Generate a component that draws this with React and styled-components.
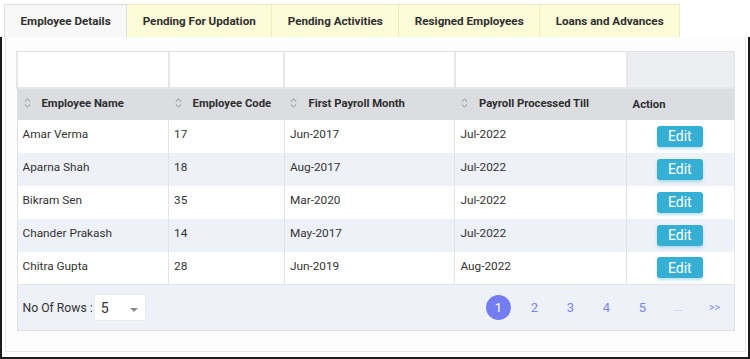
import React from 'react'
import styled, { createGlobalStyle } from 'styled-components'

const GlobalStyle = createGlobalStyle`
  html, body {
    margin: 0;
    padding: 0;
    background: #ffffff;
  }
  * {
    box-sizing: border-box;
  }
`

const Frame = styled.div`
  width: 750px;
  height: 359px;
  display: flex;
  flex-direction: column;
  background: #f5f6f9;
  font-family: Roboto, 'Liberation Sans', sans-serif;
  color: #333;
  overflow: hidden;
`

const TabBar = styled.div`
  display: flex;
  height: 37px;
  padding: 4px 0 0 4px;
  background: #ffffff;
`

const Tab = styled.div`
  display: flex;
  align-items: center;
  height: 33px;
  padding: 0 15.5px;
  font-size: 11.65px;
  font-weight: 700;
  color: #2f2f2f;
  background: ${(p) => (p.active ? '#f8f8f8' : '#fdfcd8')};
  border: 1px solid ${(p) => (p.active ? '#dedede' : '#eeecbc')};
  border-bottom: none;
  border-left-width: ${(p) => (p.first ? '1px' : '0')};
`

const Body = styled.div`
  flex: 1;
  display: flex;
  padding: 0 2px 5px 3px;
  border-left: 2px solid #1c1c1c;
  border-right: 2px solid #1c1c1c;
  border-bottom: 2px solid #1c1c1c;
  background: #ffffff;
`

const Panel = styled.div`
  flex: 1;
  padding: 14px 10px 0 10px;
  background: #fdfdfe;
  border: 1px solid #e5e7eb;
  border-top: none;
`

const Table = styled.table`
  width: 719px;
  border-collapse: collapse;
  border: 1px solid #dfe1e5;
  font-size: 11.8px;
`

const FilterCell = styled.td`
  height: 36px;
  background: ${(p) => (p.muted ? '#eceef2' : '#ffffff')};
  border: 2px solid #e6e7ea;
  border-top: none;
`

const HeadCell = styled.th`
  height: 32px;
  padding: 0 6px;
  text-align: left;
  font-size: 11.3px;
  font-weight: 700;
  color: #2e2e2e;
  background: #dcdde1;
  white-space: nowrap;
`

const HeadInner = styled.span`
  display: inline-flex;
  align-items: center;
  gap: 11px;
`

const Row = styled.tr`
  background: ${(p) => (p.alt ? '#eef1f8' : '#ffffff')};
`

const Cell = styled.td`
  height: 33px;
  padding: 0 6px 4px 5px;
  border-right: 1px solid #e3e4e8;
  color: #333;
  text-align: ${(p) => (p.center ? 'center' : 'left')};
  vertical-align: middle;
`

const EditButton = styled.button`
  width: 46px;
  height: 21px;
  margin-top: 4px;
  border: none;
  border-radius: 3px;
  background: #36afd4;
  color: #ffffff;
  font-family: Roboto, 'Liberation Sans', sans-serif;
  font-size: 14px;
  box-shadow: 0 2px 3px rgba(54, 175, 212, 0.35);
  cursor: pointer;
`

const FooterCell = styled.td`
  height: 46px;
  padding: 0 1px 0 5px;
  background: #eef1f8;
  border-top: 1px solid #e3e4e8;
`

const Footer = styled.div`
  display: flex;
  align-items: center;
  justify-content: space-between;
`

const RowsLabel = styled.div`
  display: flex;
  align-items: center;
  gap: 1px;
  font-size: 12.2px;
  color: #333;
`

const Select = styled.div`
  position: relative;
  width: 52px;
  height: 27px;
  display: flex;
  align-items: center;
  padding-left: 6px;
  background: #ffffff;
  border-radius: 3px;
  border: 1px solid #e8eaee;
  font-size: 14px;
`

const Caret = styled.span`
  position: absolute;
  right: 7px;
  top: 13px;
  width: 0;
  height: 0;
  border-left: 4px solid transparent;
  border-right: 4px solid transparent;
  border-top: 4px solid #8a8a8a;
`

const Pager = styled.div`
  display: flex;
  align-items: center;
`

const PageItem = styled.div`
  width: 36px;
  height: 26px;
  display: flex;
  align-items: center;
  justify-content: center;
  font-size: ${(p) => p.size || '13px'};
  color: ${(p) => (p.current ? '#ffffff' : p.faint ? '#a9afe9' : '#7b85ef')};
`

const PageBubble = styled.span`
  width: 25px;
  height: 25px;
  border-radius: 50%;
  display: flex;
  align-items: center;
  justify-content: center;
  background: #737df0;
`

const SortIcon = () => (
  <svg width="7" height="10" viewBox="0 0 7 10" fill="none" stroke="#8a8a8a" strokeWidth="1">
    <path d="M0.8 3.6 L3.5 1 L6.2 3.6" />
    <path d="M0.8 6.4 L3.5 9 L6.2 6.4" />
  </svg>
)

const tabs = [
  'Employee Details',
  'Pending For Updation',
  'Pending Activities',
  'Resigned Employees',
  'Loans and Advances',
]

const columns = [
  { label: 'Employee Name', width: 152, sort: true },
  { label: 'Employee Code', width: 116, sort: true },
  { label: 'First Payroll Month', width: 171, sort: true },
  { label: 'Payroll Processed Till', width: 172, sort: true },
  { label: 'Action', width: 108, sort: false },
]

const employees = [
  { name: 'Amar Verma', code: '17', first: 'Jun-2017', till: 'Jul-2022' },
  { name: 'Aparna Shah', code: '18', first: 'Aug-2017', till: 'Jul-2022' },
  { name: 'Bikram Sen', code: '35', first: 'Mar-2020', till: 'Jul-2022' },
  { name: 'Chander Prakash', code: '14', first: 'May-2017', till: 'Jul-2022' },
  { name: 'Chitra Gupta', code: '28', first: 'Jun-2019', till: 'Aug-2022' },
]

const App = () => {
  return (
    <Frame>
      <GlobalStyle />
      <TabBar>
        {tabs.map((t, i) => (
          <Tab key={t} active={i === 0} first={i === 0}>
            {t}
          </Tab>
        ))}
      </TabBar>
      <Body>
        <Panel>
          <Table>
            <colgroup>
              {columns.map((c) => (
                <col key={c.label} style={{ width: c.width }} />
              ))}
            </colgroup>
            <thead>
              <tr>
                {columns.map((c) => (
                  <FilterCell key={c.label} muted={!c.sort} />
                ))}
              </tr>
              <tr>
                {columns.map((c) => (
                  <HeadCell key={c.label}>
                    <HeadInner>
                      {c.sort && <SortIcon />}
                      {c.label}
                    </HeadInner>
                  </HeadCell>
                ))}
              </tr>
            </thead>
            <tbody>
              {employees.map((e, i) => (
                <Row key={e.name} alt={i % 2 === 1}>
                  <Cell>{e.name}</Cell>
                  <Cell>{e.code}</Cell>
                  <Cell>{e.first}</Cell>
                  <Cell>{e.till}</Cell>
                  <Cell center>
                    <EditButton>Edit</EditButton>
                  </Cell>
                </Row>
              ))}
              <tr>
                <FooterCell colSpan={5}>
                  <Footer>
                    <RowsLabel>
                      No Of Rows :
                      <Select>
                        5
                        <Caret />
                      </Select>
                    </RowsLabel>
                    <Pager>
                      <PageItem current>
                        <PageBubble>1</PageBubble>
                      </PageItem>
                      <PageItem>2</PageItem>
                      <PageItem>3</PageItem>
                      <PageItem>4</PageItem>
                      <PageItem>5</PageItem>
                      <PageItem size="10px" faint>...</PageItem>
                      <PageItem size="11px">&gt;&gt;</PageItem>
                    </Pager>
                  </Footer>
                </FooterCell>
              </tr>
            </tbody>
          </Table>
        </Panel>
      </Body>
    </Frame>
  )
}

export default App
